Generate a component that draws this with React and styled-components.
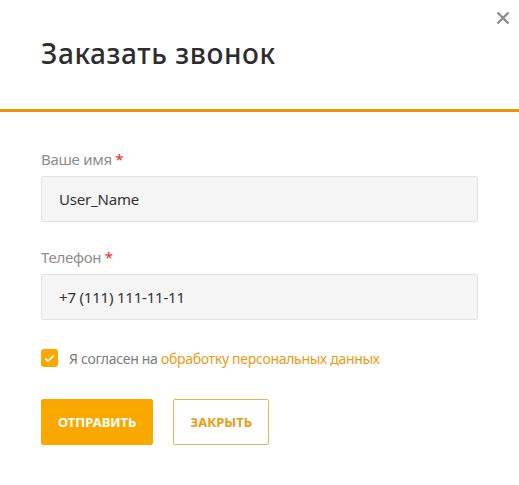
import React, { useState } from "react";
import styled, { createGlobalStyle } from "styled-components";

const GlobalStyle = createGlobalStyle`
  body {
    margin: 0;
    background: #fff;
    font-family: "Noto Sans", "Open Sans", sans-serif;
  }
`;

const ORANGE = "#f9a800";

function App() {
  const [name, setName] = useState("User_Name");
  const [phone, setPhone] = useState("+7 (111) 111-11-11");
  const [agree, setAgree] = useState(true);

  return (
    <>
      <GlobalStyle />
      <Modal>
        <CloseButton aria-label="close">
          <svg width="14" height="14" viewBox="0 0 14 14">
            <path d="M1.5 1.5 L12.5 12.5 M12.5 1.5 L1.5 12.5" stroke="#8c8c8c" strokeWidth="2.4" />
          </svg>
        </CloseButton>
        <Header>
          <Title>Заказать звонок</Title>
        </Header>
        <Form onSubmit={(e) => e.preventDefault()}>
          <Field>
            <Label>
              Ваше имя <Star>*</Star>
            </Label>
            <Input value={name} onChange={(e) => setName(e.target.value)} />
          </Field>
          <Field>
            <Label>
              Телефон <Star>*</Star>
            </Label>
            <Input value={phone} onChange={(e) => setPhone(e.target.value)} />
          </Field>
          <Agree>
            <Check $checked={agree} onClick={() => setAgree(!agree)}>
              {agree && (
                <svg width="11" height="9" viewBox="0 0 11 9">
                  <path d="M1.2 4.6 L4 7.2 L9.8 1.4" stroke="#fff" strokeWidth="1.6" fill="none" />
                </svg>
              )}
            </Check>
            <AgreeText>
              Я согласен на <Link href="#">обработку персональных данных</Link>
            </AgreeText>
          </Agree>
          <Buttons>
            <Button $primary type="submit">ОТПРАВИТЬ</Button>
            <Button type="button">ЗАКРЫТЬ</Button>
          </Buttons>
        </Form>
      </Modal>
    </>
  );
}

const Modal = styled.div`
  position: relative;
  width: 519px;
  min-height: 485px;
  background: #fff;
`;

const CloseButton = styled.button`
  position: absolute;
  top: 11px;
  right: 9px;
  width: 14px;
  height: 14px;
  padding: 0;
  border: none;
  background: none;
  cursor: pointer;
  display: flex;
`;

const Header = styled.div`
  padding: 39px 41px 42px;
  border-bottom: 3px solid #ec9507;
`;

const Title = styled.h2`
  margin: 0;
  font-size: 28px;
  line-height: 28px;
  font-weight: 500;
  letter-spacing: 0.6px;
  color: #2d2d2d;
`;

const Form = styled.form`
  padding: 40px 41px 0;
  display: flex;
  flex-direction: column;
`;

const Field = styled.div`
  display: flex;
  flex-direction: column;
  gap: 9px;
  margin-bottom: 28px;
  &:nth-of-type(2) {
    margin-bottom: 29px;
  }
`;

const Label = styled.label`
  font-size: 15px;
  line-height: 15px;
  letter-spacing: -0.3px;
  color: #8c8c8c;
`;

const Star = styled.span`
  color: #e8262a;
`;

const Input = styled.input`
  box-sizing: border-box;
  width: 437px;
  height: 46px;
  padding: 0 17px;
  border: 1px solid #e3e3e3;
  border-radius: 2px;
  background: #f5f5f5;
  font-family: inherit;
  font-size: 15px;
  letter-spacing: -0.2px;
  color: #333;
  outline: none;
`;

const Agree = styled.div`
  display: flex;
  align-items: center;
  gap: 11px;
  height: 18px;
`;

const Check = styled.span`
  width: 17px;
  height: 18px;
  border-radius: 3px;
  background: ${(p) => (p.$checked ? ORANGE : "#fff")};
  border: ${(p) => (p.$checked ? "none" : "1px solid #ccc")};
  display: flex;
  align-items: center;
  justify-content: center;
  cursor: pointer;
`;

const AgreeText = styled.span`
  font-size: 14px;
  letter-spacing: -0.3px;
  color: #7a7a7a;
`;

const Link = styled.a`
  color: #eb9a14;
  text-decoration: none;
`;

const Buttons = styled.div`
  display: flex;
  gap: 20px;
  margin-top: 32px;
`;

const Button = styled.button`
  height: 46px;
  padding: 0 16px;
  border-radius: 2px;
  border: 1px solid ${(p) => (p.$primary ? ORANGE : "#e3b85c")};
  background: ${(p) => (p.$primary ? ORANGE : "#fff")};
  color: ${(p) => (p.$primary ? "#fff" : "#eb9a14")};
  font-family: inherit;
  font-size: 13px;
  font-weight: 700;
  cursor: pointer;
`;

export default App;
